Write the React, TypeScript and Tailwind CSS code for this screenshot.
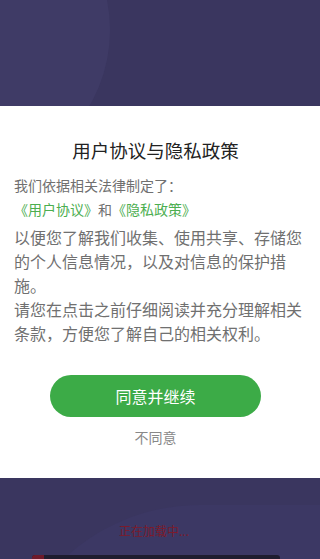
export default function App() {
  return (
    <div
      className="relative flex h-[559px] w-[320px] flex-col overflow-hidden bg-[#3a365f]"
      style={{ fontFamily: '"Noto Sans CJK SC", "Noto Sans", sans-serif' }}
    >
      {/* background decoration */}
      <div className="pointer-events-none absolute -left-[190px] -top-[120px] h-[300px] w-[300px] rounded-full bg-[#43406a]/60" />
      <div className="pointer-events-none absolute -right-[220px] top-[505px] h-[400px] w-[540px] rounded-full bg-[#3c3864]" />

      <div className="relative h-[106px] shrink-0" />

      <div className="relative flex h-[372px] shrink-0 flex-col bg-white px-[14px] pt-[31px]">
        <h1 className="pr-[9px] text-center text-[18.5px] leading-[26px] text-[#222]">用户协议与隐私政策</h1>
        <p className="mt-[10px] text-[14px] leading-[24px] text-[#707070]">我们依据相关法律制定了：</p>
        <p className="text-[14px] leading-[24px] text-[#707070]">
          <span className="text-[#4cae4f]">《用户协议》</span>和<span className="text-[#4cae4f]">《隐私政策》</span>
        </p>
        <p className="mt-[4px] text-[16px] leading-[24px] text-[#707070]">
          以便您了解我们收集、使用共享、存储您的个人信息情况，以及对信息的保护措施。
          <br />
          请您在点击之前仔细阅读并充分理解相关条款，方便您了解自己的相关权利。
        </p>
        <button className="ml-[36px] mt-[30px] flex h-[42px] w-[211px] items-center justify-center self-start rounded-full bg-[#3cab47] text-[16px] text-white">
          同意并继续
        </button>
        <div className="mt-[10px] flex justify-center pr-[9px]">
          <button className="text-[14px] leading-[20px] text-[#888]">不同意</button>
        </div>
      </div>

      <div className="relative flex flex-1 flex-col items-center">
        <p className="mt-[45px] pr-[12px] text-[12px] leading-[16px] text-[#7b1b2c]">正在加载中...</p>
        <div className="ml-[32px] mt-[16px] flex h-[10px] w-[248px] self-start overflow-hidden rounded-t-[3px] bg-[#1f1d2f]">
          <div className="h-full w-[12px] bg-[#6e1a2a]" />
        </div>
      </div>
    </div>
  )
}
